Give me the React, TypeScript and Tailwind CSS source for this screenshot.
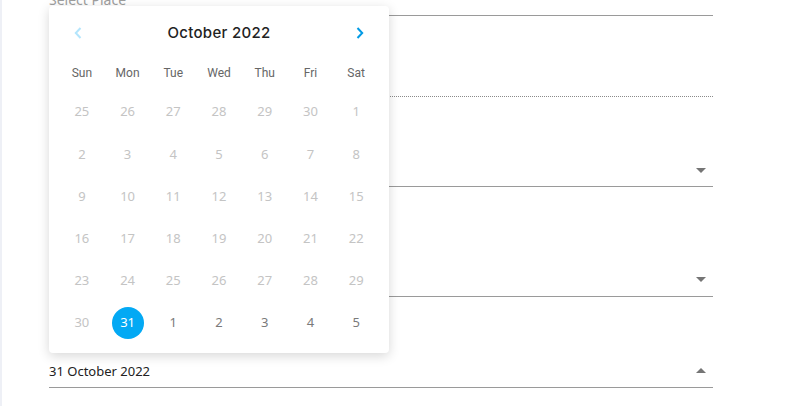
import React from 'react';

const poppins = { fontFamily: '"Noto Sans", "Open Sans", sans-serif' };

const weekdays = ['Sun', 'Mon', 'Tue', 'Wed', 'Thu', 'Fri', 'Sat'];

// each cell: [label, state] — 'off' = disabled, 'on' = selectable, 'sel' = selected
const weeks: [string, 'off' | 'on' | 'sel'][][] = [
  [['25', 'off'], ['26', 'off'], ['27', 'off'], ['28', 'off'], ['29', 'off'], ['30', 'off'], ['1', 'off']],
  [['2', 'off'], ['3', 'off'], ['4', 'off'], ['5', 'off'], ['6', 'off'], ['7', 'off'], ['8', 'off']],
  [['9', 'off'], ['10', 'off'], ['11', 'off'], ['12', 'off'], ['13', 'off'], ['14', 'off'], ['15', 'off']],
  [['16', 'off'], ['17', 'off'], ['18', 'off'], ['19', 'off'], ['20', 'off'], ['21', 'off'], ['22', 'off']],
  [['23', 'off'], ['24', 'off'], ['25', 'off'], ['26', 'off'], ['27', 'off'], ['28', 'off'], ['29', 'off']],
  [['30', 'off'], ['31', 'sel'], ['1', 'on'], ['2', 'on'], ['3', 'on'], ['4', 'on'], ['5', 'on']],
];

const ArrowDrop = ({ up = false }: { up?: boolean }) => (
  <svg width="10" height="5" viewBox="0 0 10 5" aria-hidden="true">
    <polygon points={up ? '0,5 10,5 5,0' : '0,0 10,0 5,5'} fill="#757575" />
  </svg>
);

const Chevron = ({ dir, color }: { dir: 'left' | 'right'; color: string }) => (
  <svg width="8" height="12" viewBox="0 0 8 12" aria-hidden="true">
    <polyline
      points={dir === 'left' ? '6.5,1 1.8,6 6.5,11' : '1.5,1 6.2,6 1.5,11'}
      fill="none"
      stroke={color}
      strokeWidth="2"
    />
  </svg>
);

const DatePopup = () => (
  <div className="absolute left-[47px] top-[6px] w-[340px] h-[347px] rounded-[4px] bg-white shadow-[0_3px_12px_rgba(0,0,0,0.16)] px-[10px]">
    {/* Month header */}
    <div className="h-[54px] flex items-center justify-between px-[9px]">
      <button className="w-[20px] flex justify-center">
        <Chevron dir="left" color="#b3e5fc" />
      </button>
      <span
        className="text-[15px] font-medium text-[#222222] tracking-[0.3px]"
        style={{ fontFamily: 'Inter, "Noto Sans", sans-serif' }}
      >
        October 2022
      </span>
      <button className="w-[20px] flex justify-center">
        <Chevron dir="right" color="#039be5" />
      </button>
    </div>

    {/* Weekdays */}
    <div className="grid grid-cols-7 h-[26px] items-center">
      {weekdays.map((d) => (
        <span
          key={d}
          className="text-center text-[12px] text-[#666666]"
          style={{ fontFamily: 'Roboto, sans-serif' }}
        >
          {d}
        </span>
      ))}
    </div>

    {/* Days */}
    <div className="mt-[5px]">
      {weeks.map((week, i) => (
        <div key={i} className="grid grid-cols-7 h-[42.2px] items-center">
          {week.map(([label, state], j) => (
            <div key={j} className="flex justify-center">
              {state === 'sel' ? (
                <span
                  className="w-[32px] h-[32px] rounded-full bg-[#03a9f4] text-white text-[13px] flex items-center justify-center"
                  style={poppins}
                >
                  {label}
                </span>
              ) : (
                <span
                  className={
                    state === 'on'
                      ? 'text-[13px] text-[#7a7a7a]'
                      : 'text-[13px] text-[#c4c4c4]'
                  }
                  style={poppins}
                >
                  {label}
                </span>
              )}
            </div>
          ))}
        </div>
      ))}
    </div>
  </div>
);

export default function App() {
  return (
    <div className="relative h-[406px] w-[796px] overflow-hidden bg-white border-l-[2px] border-[#eef0f6]">
      <div className="-mt-[20px] ml-[47px] w-[664px] flex flex-col" style={poppins}>
        {/* Select Place */}
        <div className="h-[36px] border-b border-[#9a9a9a] flex items-end justify-between pb-[5px] pr-[7px]">
          <span className="text-[14px] leading-[20px] text-[#9e9e9e]">Select Place</span>
          <span className="mb-[10px]">
            <ArrowDrop />
          </span>
        </div>

        {/* text field (dotted) */}
        <div className="h-[81px] border-b border-dotted border-[#8a8a8a]" />

        {/* select */}
        <div className="h-[90px] border-b border-[#9a9a9a] flex items-end justify-end pr-[7px] pb-[13px]">
          <ArrowDrop />
        </div>

        {/* select */}
        <div className="h-[110px] border-b border-[#9a9a9a] flex items-end justify-end pr-[7px] pb-[14px]">
          <ArrowDrop />
        </div>

        {/* date */}
        <div className="h-[91px] border-b border-[#9a9a9a] flex items-end justify-between pr-[7px] pb-[6px]">
          <span className="text-[13px] leading-[20px] text-[#222222]">31 October 2022</span>
          <span className="mb-[8px]">
            <ArrowDrop up />
          </span>
        </div>
      </div>

      <DatePopup />
    </div>
  );
}
